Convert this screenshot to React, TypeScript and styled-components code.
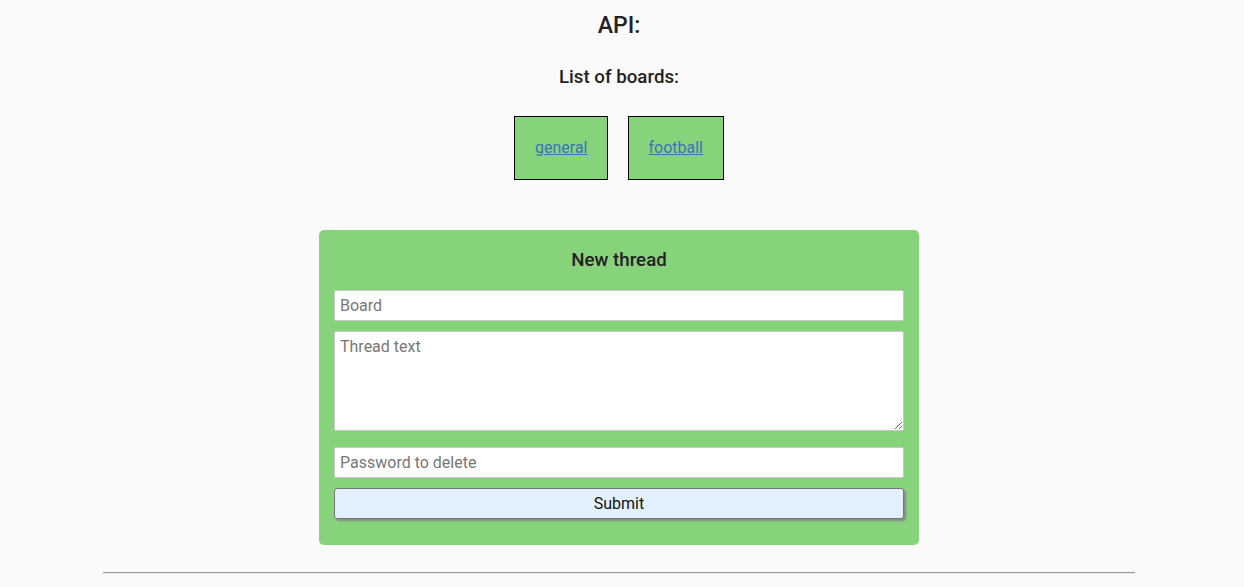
import React from "react";
import styled, { createGlobalStyle } from "styled-components";

const Global = createGlobalStyle`
  html, body { margin: 0; padding: 0; background: #fafafa; }
  body { font-family: Roboto, "Noto Sans", Arial, sans-serif; color: #222; }
  * { box-sizing: border-box; }
`;

const Page = styled.div`
  display: flex;
  flex-direction: column;
  align-items: center;
  padding-right: 6px;
`;

const Title = styled.h1`
  margin: 12px 0 0;
  font-size: 23px;
  line-height: 28px;
  font-weight: 500;
`;

const Subtitle = styled.h2`
  margin: 26px 0 0;
  font-size: 18.72px;
  line-height: 22px;
  font-weight: 500;
`;

const BoardList = styled.div`
  display: flex;
  gap: 20px;
  margin-top: 28px;
`;

const BoardBox = styled.div`
  height: 64px;
  padding: 0 19.5px 1px;
  background: #87d37c;
  border: 1px solid #000;
  display: flex;
  align-items: center;
  justify-content: center;
`;

const BoardLink = styled.a`
  color: #3b74b8;
  font-size: 16px;
  text-decoration: underline;
`;

const FormCard = styled.form`
  margin-top: 50px;
  width: 600px;
  background: #87d37c;
  border-radius: 5px;
  padding: 15px 15px 26px;
  display: flex;
  flex-direction: column;
`;

const FormTitle = styled.h3`
  margin: 0;
  text-align: center;
  font-size: 18.72px;
  line-height: 30px;
  font-weight: 500;
  margin-bottom: 15px;
`;

const Field = styled.input`
  height: 31px;
  width: 100%;
  border: 1px solid #c8c8c8;
  border-radius: 2px;
  padding: 0 5px;
  font-family: Roboto, Arial, sans-serif;
  font-size: 16px;
  background: #fff;
  margin-bottom: 10px;
  &::placeholder { color: #777; }
`;

const Area = styled.textarea`
  height: 100px;
  width: 100%;
  border: 1px solid #c8c8c8;
  border-radius: 2px;
  padding: 5px 5px;
  font-family: Roboto, Arial, sans-serif;
  font-size: 16px;
  margin: 0 0 16px;
  display: block;
  resize: vertical;
  &::placeholder { color: #777; }
`;

const SubmitButton = styled.button`
  height: 31px;
  width: 100%;
  background: #e2f0fe;
  border: 1px solid #777;
  border-radius: 3px;
  box-shadow: 2px 2px 2px #8a8a8a;
  font-family: Roboto, Arial, sans-serif;
  font-size: 16px;
  color: #111;
`;

const Rule = styled.hr`
  margin: 27px 0 0;
  width: 1032px;
  border: none;
  border-top: 1px solid #999;
  border-bottom: 1px solid #e6e6e6;
`;

export default function App() {
  return (
    <>
      <Global />
      <Page>
        <Title>API:</Title>
        <Subtitle>List of boards:</Subtitle>
        <BoardList>
          <BoardBox><BoardLink href="#">general</BoardLink></BoardBox>
          <BoardBox><BoardLink href="#">football</BoardLink></BoardBox>
        </BoardList>
        <FormCard onSubmit={(e) => e.preventDefault()}>
          <FormTitle>New thread</FormTitle>
          <Field placeholder="Board" />
          <Area placeholder="Thread text" />
          <Field placeholder="Password to delete" />
          <SubmitButton type="submit">Submit</SubmitButton>
        </FormCard>
        <Rule />
      </Page>
    </>
  );
}
